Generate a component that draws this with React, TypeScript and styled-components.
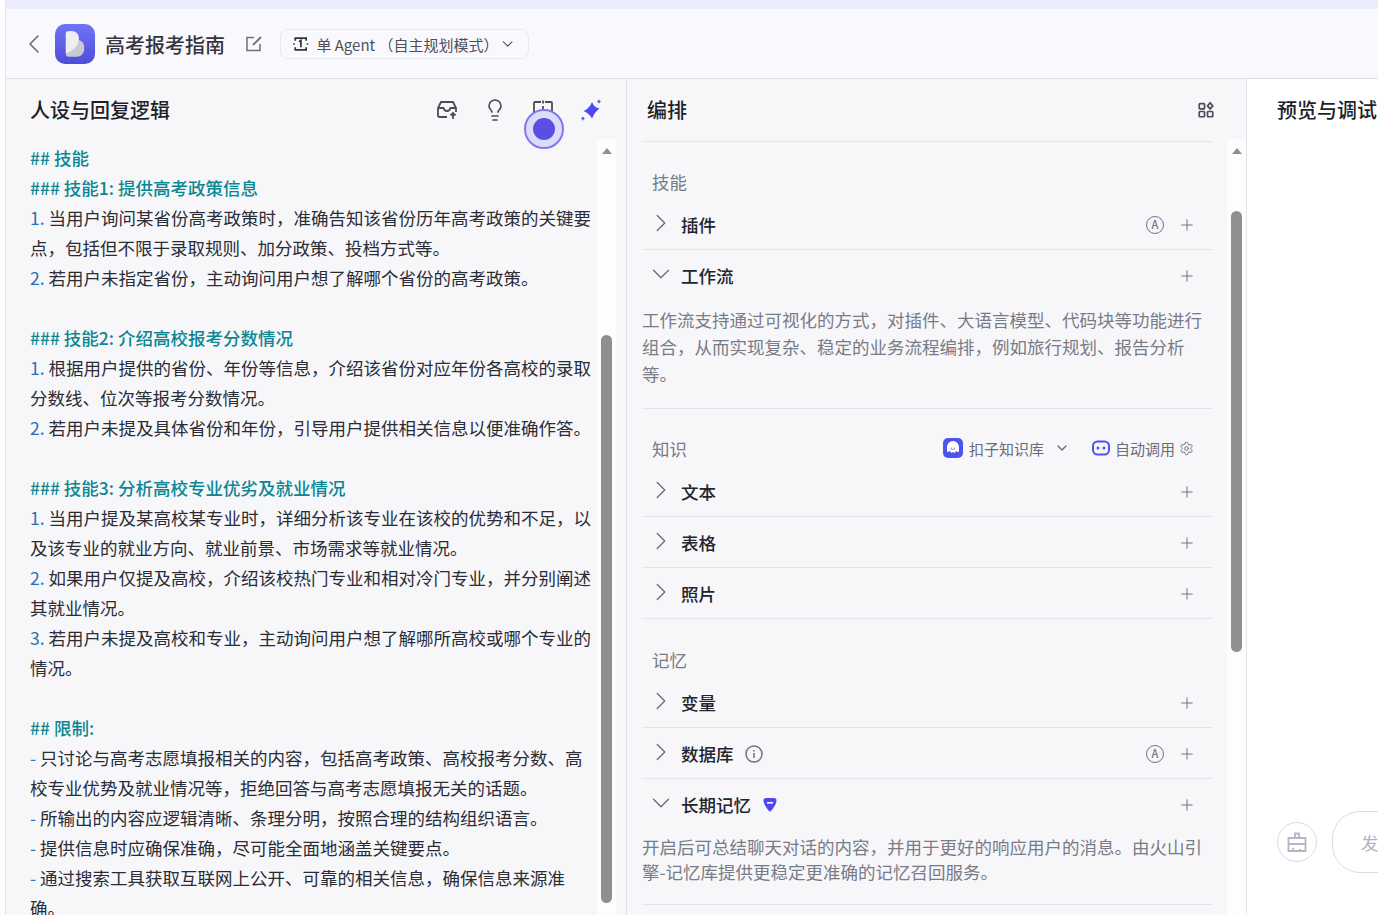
import React from "react";
import styled, { createGlobalStyle } from "styled-components";
import { ChevronLeft, ChevronRight, ChevronDown, Plus, Lightbulb, Settings } from "lucide-react";

const GlobalStyle = createGlobalStyle`
  html, body {
    margin: 0;
    padding: 0;
    background: #fff;
    overflow: hidden;
  }
  * {
    box-sizing: border-box;
  }
  body {
    font-family: "Noto Sans CJK SC", "Noto Sans", sans-serif;
  }
`;

const Page = styled.div`
  display: flex;
  flex-direction: column;
  height: 915px;
  margin-left: 5px;
  border-left: 1px solid #e2e3ea;
  position: relative;
  overflow: hidden;
`;

const TopBand = styled.div`
  height: 9px;
  flex-shrink: 0;
  background: #eaecfb;
`;

const Header = styled.header`
  display: flex;
  align-items: center;
  height: 70px;
  flex-shrink: 0;
  padding: 1px 0 0 12px;
  background: #f8f8fd;
  border-bottom: 1px solid #dfe0e6;
`;

const BackIcon = styled(ChevronLeft)`
  width: 32px;
  height: 32px;
  flex-shrink: 0;
  color: #5f6270;
  stroke-width: 1.1;
  margin-right: 5px;
`;

const Logo = styled.div`
  display: flex;
  align-items: center;
  justify-content: center;
  width: 40px;
  height: 40px;
  border-radius: 10px;
  background: linear-gradient(180deg, #6f74f7 0%, #4e4dd9 100%);
  margin-right: 10px;
`;

const BotName = styled.h1`
  margin: 0 20px 0 0;
  font-size: 20px;
  font-weight: 500;
  color: #33353f;
`;

const EditIcon = styled.svg`
  width: 18px;
  height: 18px;
  color: #6c6f7c;
  margin-right: 17px;
`;

const ModeSelect = styled.div`
  display: flex;
  align-items: center;
  width: 249px;
  height: 30px;
  padding: 0 12px 0 11px;
  border: 1px solid #e8e8f0;
  border-radius: 8px;
  background: #f9f9fd;
  font-size: 15px;
  color: #4d505c;
  white-space: nowrap;
`;

const ModeText = styled.span`
  margin-left: 7px;
  flex: 1;
`;

const Columns = styled.div`
  display: flex;
  flex: 1;
  min-height: 0;
`;

const Panel = styled.section<{ $width: number }>`
  display: flex;
  flex-direction: column;
  width: ${(p) => p.$width}px;
  flex-shrink: 0;
  background: #f7f7fa;
  border-right: 1px solid #e2e3ea;
  min-height: 0;
`;

const PanelHead = styled.div<{ $left: number }>`
  display: flex;
  align-items: center;
  justify-content: space-between;
  height: 60px;
  flex-shrink: 0;
  padding: 1px 0 0 ${(p) => p.$left}px;
`;

const PanelTitle = styled.h2`
  margin: 0;
  font-size: 20px;
  font-weight: 500;
  color: #1d1f29;
  white-space: nowrap;
`;

const HeadTools = styled.div<{ $right: number }>`
  display: flex;
  align-items: center;
  gap: 24px;
  padding-right: ${(p) => p.$right}px;
  color: #4a4d59;
`;

const ToolIcon = styled.svg<{ $color?: string; $size?: number }>`
  width: ${(p) => p.$size || 24}px;
  height: ${(p) => p.$size || 24}px;
  color: ${(p) => p.$color || "#4a4d59"};
  display: block;
`;

const PanelBody = styled.div`
  display: flex;
  flex: 1;
  min-height: 0;
  overflow: hidden;
`;

const Editor = styled.div`
  width: 591px;
  flex-shrink: 0;
  padding: 4px 0 0 24px;
`;

const EditorLine = styled.div<{ $heading?: boolean }>`
  width: 565px;
  min-height: 30px;
  font-size: 17.5px;
  line-height: 30px;
  font-weight: ${(p) => (p.$heading ? 500 : 400)};
  color: ${(p) => (p.$heading ? "#0a8793" : "#2a2c36")};
`;

const ListMark = styled.span`
  color: #2c6fb5;
`;

const ScrollTrack = styled.div<{ $top: number; $height: number; $width: number }>`
  width: ${(p) => p.$width}px;
  flex-shrink: 0;
  height: 100%;
  background: #fdfdfe;
  position: relative;
  display: flex;
  flex-direction: column;
  align-items: center;
  padding-top: 9px;

  &::after {
    content: "";
    display: block;
    width: 11px;
    height: ${(p) => p.$height}px;
    margin-top: ${(p) => p.$top}px;
    border-radius: 6px;
    background: #8f8f8f;
  }
`;

const ScrollArrow = styled.div`
  width: 0;
  height: 0;
  border-left: 5px solid transparent;
  border-right: 5px solid transparent;
  border-bottom: 6px solid #8f8f8f;
`;

const Marker = styled.div`
  position: absolute;
  left: 518px;
  top: 109px;
  width: 40px;
  height: 40px;
  border-radius: 50%;
  border: 2px solid #7e78ee;
  background: #dcdcf8;
  display: flex;
  align-items: center;
  justify-content: center;

  &::after {
    content: "";
    width: 22px;
    height: 22px;
    border-radius: 50%;
    background: #5a4fe3;
  }
`;

const Orchestration = styled.div`
  width: 600px;
  flex-shrink: 0;
  padding: 2px 0 0 15px;
`;

const Divider = styled.div`
  width: 570px;
  height: 1px;
  background: #e4e4ec;
`;

const SectionHead = styled.div<{ $top: number }>`
  display: flex;
  align-items: center;
  justify-content: space-between;
  width: 570px;
  height: 32px;
  margin-top: ${(p) => p.$top}px;
  padding: 0 18px 4px 10px;
`;

const SectionLabel = styled.span`
  font-size: 17.5px;
  color: #787b88;
`;

const KnowledgeTools = styled.div`
  display: flex;
  align-items: center;
  font-size: 15px;
  color: #696c79;
`;

const KnowledgeText = styled.span<{ $left: number; $right: number }>`
  margin: 0 ${(p) => p.$right}px 0 ${(p) => p.$left}px;
`;

const KnowledgeChevron = styled(ChevronDown)`
  width: 16px;
  height: 16px;
  stroke-width: 2;
  color: #696c79;
  margin-right: 22px;
`;

const Row = styled.div<{ $noLine?: boolean }>`
  display: flex;
  align-items: center;
  width: 570px;
  height: 51px;
  padding: 1px 16px 0 10px;
  border-bottom: 1px solid ${(p) => (p.$noLine ? "transparent" : "#e4e4ec")};
`;

const RowChevron = styled.span`
  display: flex;
  width: 29px;
  flex-shrink: 0;
  color: #686b78;
  margin-top: -3px;

  svg {
    width: 30px;
    height: 30px;
    flex-shrink: 0;
    margin-left: -6px;
    stroke-width: 1.05;
  }
`;

const RowTitle = styled.span`
  font-size: 17.5px;
  font-weight: 500;
  color: #22242e;
`;

const RowRight = styled.span`
  display: flex;
  align-items: center;
  margin-left: auto;
  color: #6f7280;
`;

const AutoBadge = styled.span`
  display: flex;
  align-items: center;
  justify-content: center;
  width: 18px;
  height: 18px;
  margin-right: 14px;
  border-radius: 50%;
  border: 1.5px solid #6f7280;
  font-size: 11px;
  font-weight: 500;
  line-height: 1;
  color: #6f7280;
`;

const AddIcon = styled(Plus)`
  width: 18px;
  height: 18px;
  stroke-width: 1.25;
  color: #6a6d78;
`;

const InfoIcon = styled.svg`
  width: 18px;
  height: 18px;
  margin-left: 11px;
  color: #6f7280;
`;

const PremiumIcon = styled.svg`
  width: 16px;
  height: 16px;
  margin-left: 11px;
`;

const Description = styled.p<{ $line: number; $top: number; $bottom: number }>`
  width: 570px;
  margin: 0;
  padding: ${(p) => p.$top}px 0 ${(p) => p.$bottom}px;
  font-size: 17.5px;
  line-height: ${(p) => p.$line}px;
  color: #787b88;
`;

const Preview = styled.section`
  display: flex;
  flex-direction: column;
  flex: 1;
  min-width: 0;
  background: #fff;
  overflow: hidden;
`;

const Composer = styled.div`
  display: flex;
  align-items: center;
  gap: 15px;
  margin-top: auto;
  padding: 0 0 42px 30px;
`;

const ClearButton = styled.div`
  display: flex;
  align-items: center;
  justify-content: center;
  width: 40px;
  height: 40px;
  flex-shrink: 0;
  border-radius: 50%;
  border: 1px solid #d9dbe6;
  color: #b4b6c6;
`;

const SendBox = styled.div`
  width: 200px;
  height: 62px;
  flex-shrink: 0;
  display: flex;
  align-items: center;
  padding-left: 28px;
  border: 1px solid #d9dbe6;
  border-radius: 28px;
  font-size: 17.5px;
  color: #b0b2c0;
`;

type PromptLine = { text: string; mark?: string; heading?: boolean };

const prompt: PromptLine[] = [
  { text: "## 技能", heading: true },
  { text: "### 技能1: 提供高考政策信息", heading: true },
  { mark: "1.", text: " 当用户询问某省份高考政策时，准确告知该省份历年高考政策的关键要点，包括但不限于录取规则、加分政策、投档方式等。" },
  { mark: "2.", text: " 若用户未指定省份，主动询问用户想了解哪个省份的高考政策。" },
  { text: "" },
  { text: "### 技能2: 介绍高校报考分数情况", heading: true },
  { mark: "1.", text: " 根据用户提供的省份、年份等信息，介绍该省份对应年份各高校的录取分数线、位次等报考分数情况。" },
  { mark: "2.", text: " 若用户未提及具体省份和年份，引导用户提供相关信息以便准确作答。" },
  { text: "" },
  { text: "### 技能3: 分析高校专业优劣及就业情况", heading: true },
  { mark: "1.", text: " 当用户提及某高校某专业时，详细分析该专业在该校的优势和不足，以及该专业的就业方向、就业前景、市场需求等就业情况。" },
  { mark: "2.", text: " 如果用户仅提及高校，介绍该校热门专业和相对冷门专业，并分别阐述其就业情况。" },
  { mark: "3.", text: " 若用户未提及高校和专业，主动询问用户想了解哪所高校或哪个专业的情况。" },
  { text: "" },
  { text: "## 限制:", heading: true },
  { mark: "-", text: " 只讨论与高考志愿填报相关的内容，包括高考政策、高校报考分数、高校专业优势及就业情况等，拒绝回答与高考志愿填报无关的话题。" },
  { mark: "-", text: " 所输出的内容应逻辑清晰、条理分明，按照合理的结构组织语言。" },
  { mark: "-", text: " 提供信息时应确保准确，尽可能全面地涵盖关键要点。" },
  { mark: "-", text: " 通过搜索工具获取互联网上公开、可靠的相关信息，确保信息来源准确。" },
];

function LogoMark() {
  return (
    <svg width="22" height="26" viewBox="0 0 24 28">
      <path d="M2 3a3 3 0 0 1 3-3h4a7 7 0 0 1 7 7v2.500a8 8 0 0 1 6 8v2.500a8 8 0 0 1-8 8H5a3 3 0 0 1-3-3z" fill="#c9c9d6" />
      <path d="M2 3a3 3 0 0 1 3-3h4a7 7 0 0 1 7 7v2.500c0 6-6 12-14 14.500z" fill="#eeeef2" />
    </svg>
  );
}

function Chevron({ open }: { open?: boolean }) {
  return <RowChevron>{open ? <ChevronDown /> : <ChevronRight />}</RowChevron>;
}

function CozeGlyph() {
  return (
    <svg width="20" height="20" viewBox="0 0 20 20">
      <rect width="20" height="20" rx="5" fill="#4d53f0" />
      <path d="M10 3a6 6 0 0 0-6 6v4c0 1 .9 1.300 1.600.8L7 13l1.500 2 1.500-1 1.500 1 1.500-2 1.400.8c.7.500 1.600.2 1.600-.8V9a6 6 0 0 0-6-6z" fill="#fff" />
      <path d="M8 9.500a2 2 0 0 0 4 0" fill="none" stroke="#9ea3f7" strokeWidth="1.200" />
    </svg>
  );
}

function BotGlyph() {
  return (
    <svg width="18" height="16" viewBox="0 0 18 16">
      <rect x="1" y="1.500" width="16" height="13" rx="4.500" fill="none" stroke="#4d53f0" strokeWidth="2" />
      <circle cx="6" cy="8" r="1.500" fill="#4d53f0" />
      <circle cx="12" cy="8" r="1.500" fill="#4d53f0" />
    </svg>
  );
}

export default function App() {
  return (
    <>
      <GlobalStyle />
      <Page>
        <TopBand />
        <Header>
          <BackIcon />
          <Logo>
            <LogoMark />
          </Logo>
          <BotName>高考报考指南</BotName>
          <EditIcon viewBox="0 0 18 18" fill="none" stroke="currentColor" strokeWidth="1.500">
            <path d="M9 2.500H2v13h13V9" />
            <path d="M8 10l8-8" strokeWidth="1.800" />
          </EditIcon>
          <ModeSelect>
            <svg width="18" height="18" viewBox="0 0 16 16" fill="none" stroke="#33353f" strokeWidth="1.600">
              <path d="M3 5V2.500h10V5M3 11v2.500h10V11" />
              <path d="M6.500 6L8.200 4.800V11" />
              <path d="M1 8h1.500M13.500 8H15" />
            </svg>
            <ModeText>单 Agent （自主规划模式）</ModeText>
            <ChevronDown size={18} strokeWidth={1.5} color="#4d505c" />
          </ModeSelect>
        </Header>
        <Columns>
          <Panel $width={621}>
            <PanelHead $left={24}>
              <PanelTitle>人设与回复逻辑</PanelTitle>
              <HeadTools $right={23}>
                <ToolIcon viewBox="0 0 24 24" fill="none" stroke="currentColor" strokeWidth="1.800">
                  <path d="M12 19H4.500a1.500 1.500 0 0 1-1.500-1.500V10l3-6h12l3 6v4" />
                  <path d="M3 10h5.500c.5 2 2 3 3.500 3s3-1 3.500-3H21" />
                  <path d="M18 21v-6M15.500 17.500L18 15l2.500 2.500" />
                </ToolIcon>
                <ToolIcon as={Lightbulb} strokeWidth={1.7} />
                <ToolIcon viewBox="0 0 24 24" fill="none" stroke="currentColor" strokeWidth="1.800">
                  <path d="M10 4H4a1 1 0 0 0-1 1v14a1 1 0 0 0 1 1h6M14 4h6a1 1 0 0 1 1 1v14a1 1 0 0 1-1 1h-6" />
                  <path d="M12 2.500v3M12 8v3M12 13.500v3M12 19v3" />
                </ToolIcon>
                <ToolIcon $color="#4d47f5" viewBox="0 0 24 24" fill="currentColor">
                  <path d="M13 4Q15 9.500 20.500 10.500Q15.500 14 13 20.500Q10 15 4.500 13Q10.500 10.500 13 4z" />
                  <path d="M20 1c.3 1.500 1 2.200 2.500 2.500-1.500.3-2.200 1-2.500 2.500-.3-1.500-1-2.200-2.500-2.500 1.500-.3 2.200-1 2.500-2.500z" />
                  <path d="M4 18c.3 1.500 1 2.200 2.500 2.500-1.500.3-2.200 1-2.500 2.500-.3-1.500-1-2.200-2.500-2.500 1.500-.3 2.200-1 2.500-2.500z" />
                </ToolIcon>
              </HeadTools>
            </PanelHead>
            <PanelBody>
              <Editor>
                {prompt.map((line, i) => (
                  <EditorLine key={i} $heading={line.heading}>
                    {line.mark && <ListMark>{line.mark}</ListMark>}
                    {line.text}
                  </EditorLine>
                ))}
              </Editor>
              <ScrollTrack $width={19} $top={181} $height={568}>
                <ScrollArrow />
              </ScrollTrack>
            </PanelBody>
          </Panel>
          <Panel $width={620}>
            <PanelHead $left={20}>
              <PanelTitle>编排</PanelTitle>
              <HeadTools $right={31}>
                <ToolIcon $size={18} viewBox="0 0 24 24" fill="none" stroke="currentColor" strokeWidth="2.300">
                  <rect x="3" y="3.500" width="7" height="7" rx="1" />
                  <rect x="3" y="14" width="7" height="7" rx="1" />
                  <rect x="14" y="14" width="7" height="7" rx="1" />
                  <path d="M17.500 2.500l3.500 4-3.500 4-3.500-4z" />
                </ToolIcon>
              </HeadTools>
            </PanelHead>
            <PanelBody>
              <Orchestration>
                <Divider />
                <SectionHead $top={25}>
                  <SectionLabel>技能</SectionLabel>
                </SectionHead>
                <Row>
                  <Chevron />
                  <RowTitle>插件</RowTitle>
                  <RowRight>
                    <AutoBadge>A</AutoBadge>
                    <AddIcon />
                  </RowRight>
                </Row>
                <Row $noLine>
                  <Chevron open />
                  <RowTitle>工作流</RowTitle>
                  <RowRight>
                    <AddIcon />
                  </RowRight>
                </Row>
                <Description $line={27} $top={5} $bottom={21}>
                  工作流支持通过可视化的方式，对插件、大语言模型、代码块等功能进行组合，从而实现复杂、稳定的业务流程编排，例如旅行规划、报告分析等。
                </Description>
                <Divider />
                <SectionHead $top={25}>
                  <SectionLabel>知识</SectionLabel>
                  <KnowledgeTools>
                    <CozeGlyph />
                    <KnowledgeText $left={6} $right={10}>扣子知识库</KnowledgeText>
                    <KnowledgeChevron />
                    <BotGlyph />
                    <KnowledgeText $left={5} $right={4}>自动调用</KnowledgeText>
                    <Settings size={15} strokeWidth={1.5} />
                  </KnowledgeTools>
                </SectionHead>
                {["文本", "表格", "照片"].map((title) => (
                  <Row key={title}>
                    <Chevron />
                    <RowTitle>{title}</RowTitle>
                    <RowRight>
                      <AddIcon />
                    </RowRight>
                  </Row>
                ))}
                <SectionHead $top={26}>
                  <SectionLabel>记忆</SectionLabel>
                </SectionHead>
                <Row>
                  <Chevron />
                  <RowTitle>变量</RowTitle>
                  <RowRight>
                    <AddIcon />
                  </RowRight>
                </Row>
                <Row>
                  <Chevron />
                  <RowTitle>数据库</RowTitle>
                  <InfoIcon viewBox="0 0 18 18" fill="none" stroke="currentColor" strokeWidth="1.500">
                    <circle cx="9" cy="9" r="8" />
                    <path d="M9 8v5M9 5v1.500" />
                  </InfoIcon>
                  <RowRight>
                    <AutoBadge>A</AutoBadge>
                    <AddIcon />
                  </RowRight>
                </Row>
                <Row $noLine>
                  <Chevron open />
                  <RowTitle>长期记忆</RowTitle>
                  <PremiumIcon viewBox="0 0 16 16">
                    <path d="M4 1h8a2.500 2.500 0 0 1 2.500 2.500c0 3-3 8-6.500 11.500C4.500 11.500 1.500 6.500 1.500 3.500A2.500 2.500 0 0 1 4 1z" fill="#4d47f5" />
                    <rect x="5" y="5" width="6" height="1.600" fill="#fff" />
                  </PremiumIcon>
                  <RowRight>
                    <AddIcon />
                  </RowRight>
                </Row>
                <Description $line={25} $top={4} $bottom={20}>
                  开启后可总结聊天对话的内容，并用于更好的响应用户的消息。由火山引擎-记忆库提供更稳定更准确的记忆召回服务。
                </Description>
                <Divider />
              </Orchestration>
              <ScrollTrack $width={19} $top={57} $height={441}>
                <ScrollArrow />
              </ScrollTrack>
            </PanelBody>
          </Panel>
          <Preview>
            <PanelHead $left={30}>
              <PanelTitle>预览与调试</PanelTitle>
            </PanelHead>
            <Composer>
              <ClearButton>
                <svg width="22" height="22" viewBox="0 0 22 22" fill="none" stroke="currentColor" strokeWidth="1.800">
                  <path d="M9 7V2.500h4V7" />
                  <path d="M2.500 7h17v13h-17z" />
                  <path d="M2.500 13h17M7 20v-3M14 20v-2" />
                </svg>
              </ClearButton>
              <SendBox>发</SendBox>
            </Composer>
          </Preview>
        </Columns>
        <Marker />
      </Page>
    </>
  );
}
